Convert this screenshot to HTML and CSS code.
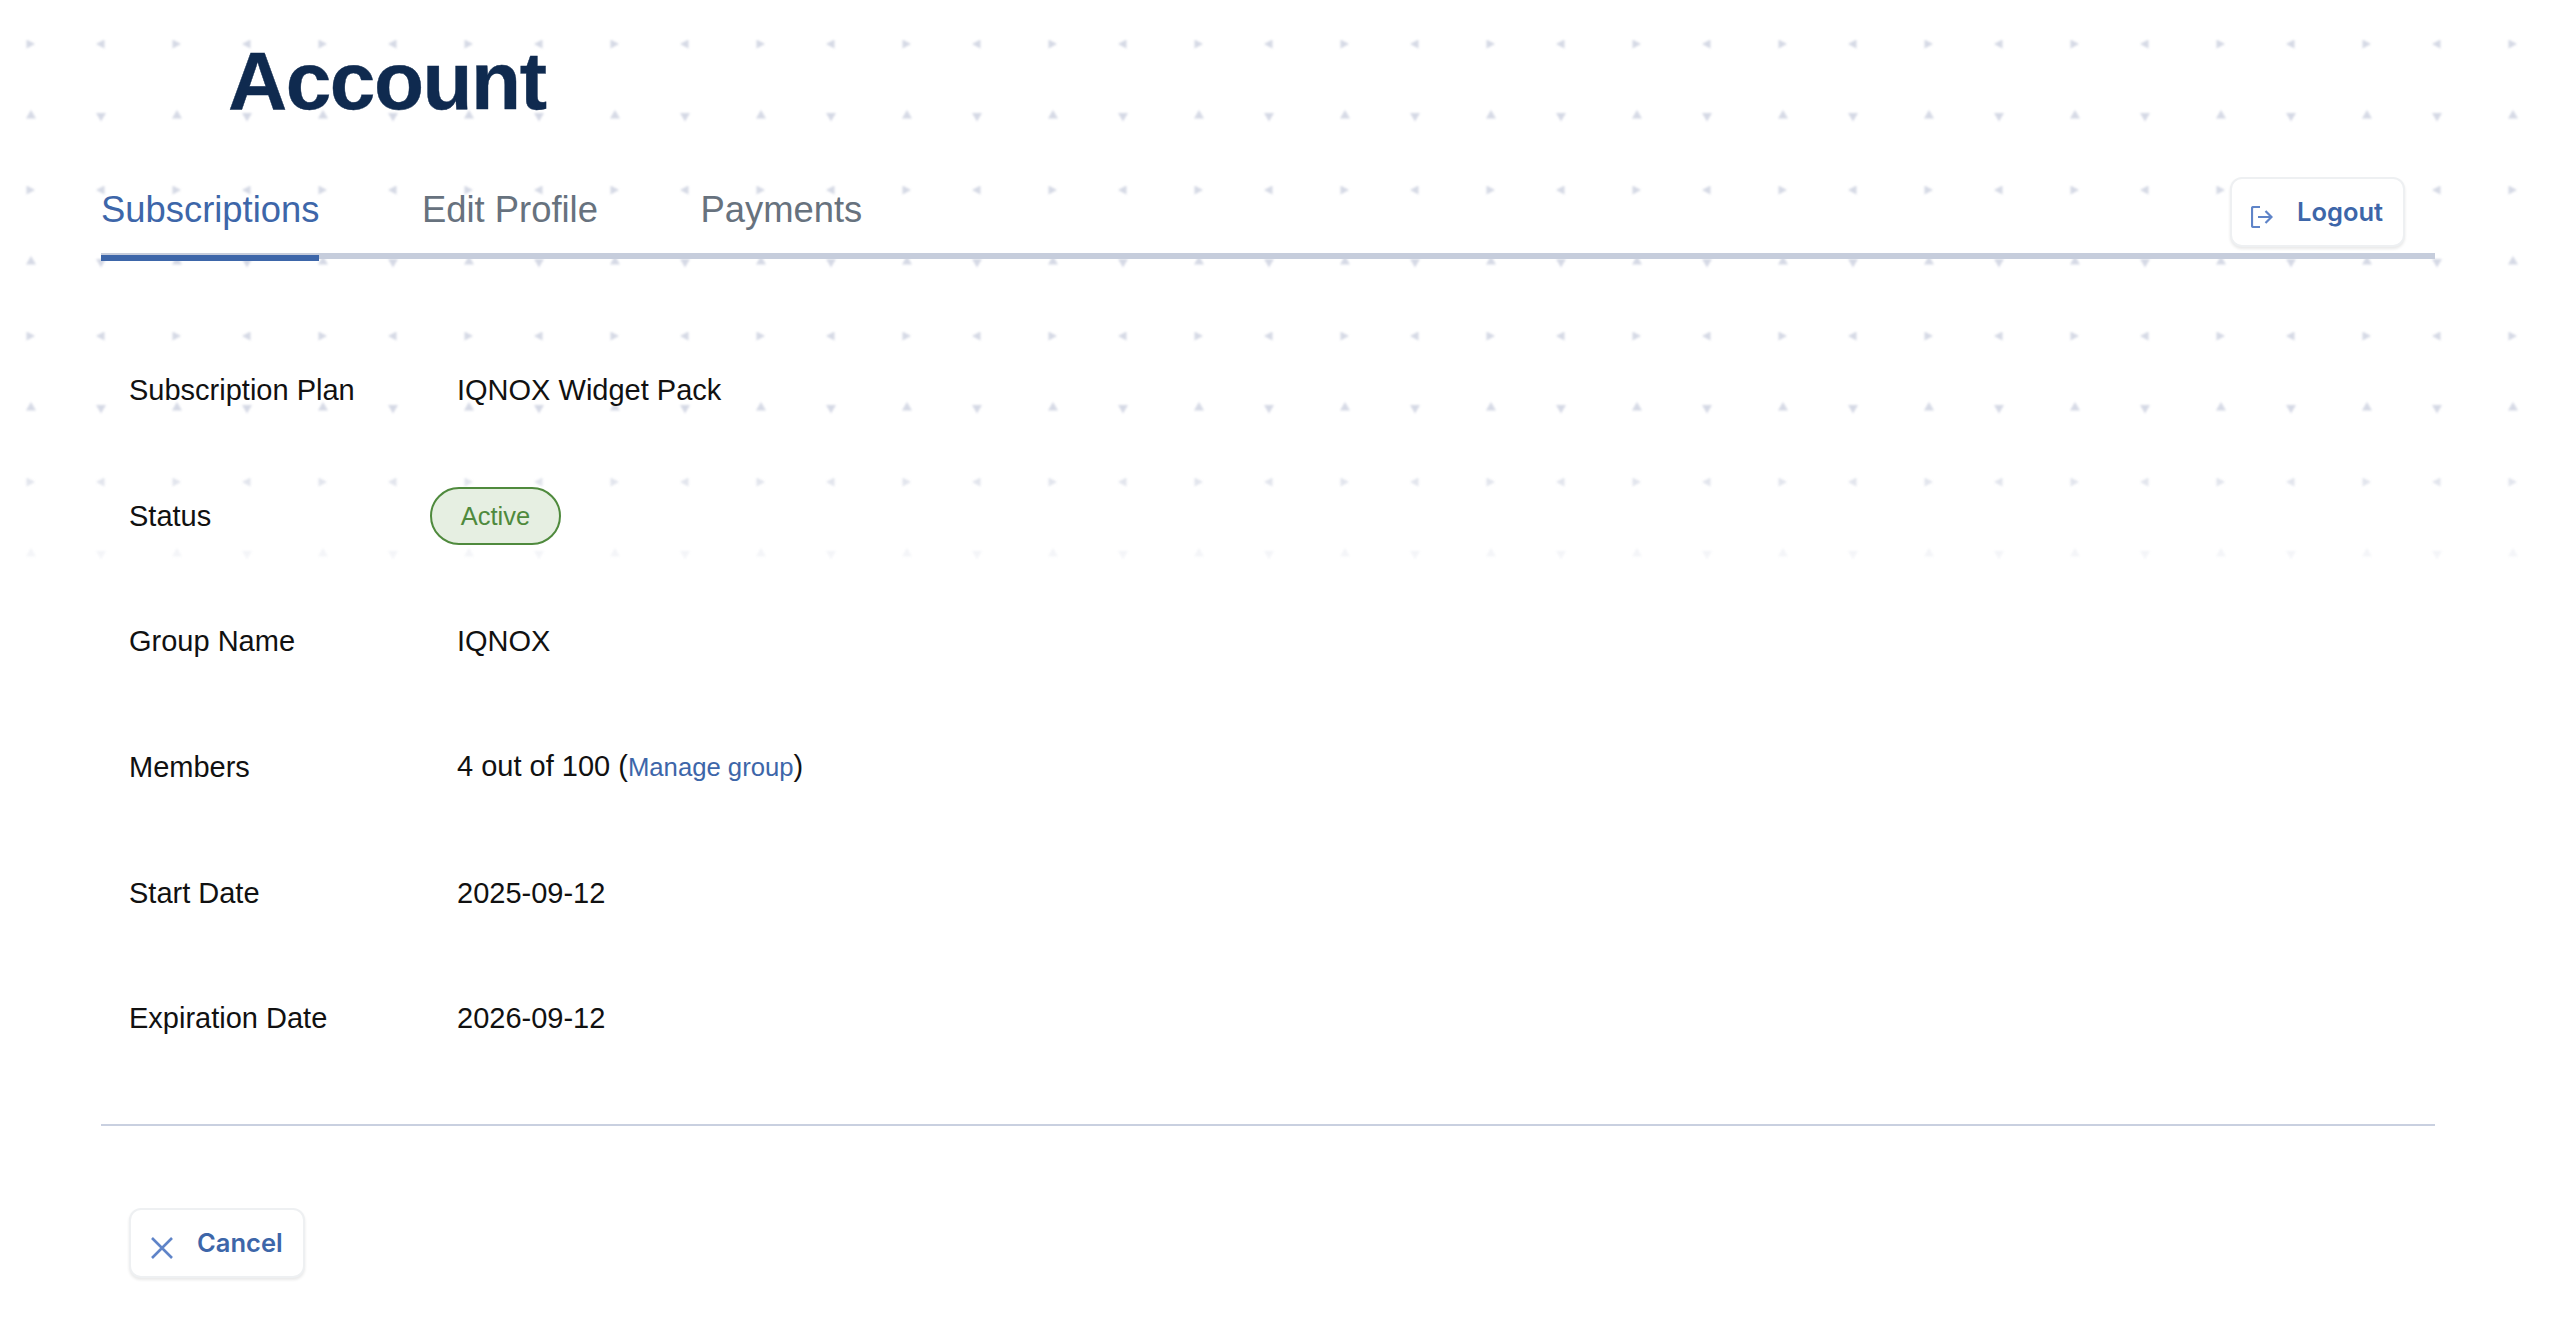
FILE: index.html
```html
<!DOCTYPE html>
<html lang="en">
<head>
<meta charset="utf-8">
<title>Account</title>
<link rel="stylesheet" href="styles.css">
</head>
<body>
<svg class="dots" aria-hidden="true" width="2560" height="640">
  <defs>
    <pattern id="tri" x="31" y="44" width="146" height="146" patternUnits="userSpaceOnUse" patternTransform="translate(-4 -4)">
      <path d="M-0.500 -0.500L8 4L-0.500 8.500Z M77.500 -0.500L69 4L77.500 8.500Z M-1 78.500L4 70L9 78.500Z M69 73L79 73L74 81.500Z" fill="#d5d9e5"/>
      <path d="M145.500 -0.500L154 4L145.500 8.500Z M145 78.500L150 70L155 78.500Z" fill="#d5d9e5"/>
    </pattern>
  </defs>
  <rect width="2560" height="640" fill="url(#tri)"/>
</svg>
<main class="page">
  <h1 class="title">Account</h1>
  <nav class="tabs">
    <a class="tab tab-active">Subscriptions</a>
    <a class="tab">Edit Profile</a>
    <a class="tab">Payments</a>
    <button class="btn btn-logout">
      <svg class="icon" viewBox="0 0 22 22" width="22" height="22"><path d="M9 1H2.500Q1 1 1 2.500V19.500Q1 21 2.500 21H9M7 11H20.500M14.500 5L20.500 11L14.500 17" fill="none" stroke="#5f84c8" stroke-width="2.200"/></svg>
      <span>Logout</span>
    </button>
  </nav>
  <dl class="details">
    <dt>Subscription Plan</dt><dd>IQNOX Widget Pack</dd>
    <dt>Status</dt><dd><span class="badge">Active</span></dd>
    <dt>Group Name</dt><dd>IQNOX</dd>
    <dt>Members</dt><dd>4 out of 100 (<a class="link">Manage group</a>)</dd>
    <dt>Start Date</dt><dd>2025-09-12</dd>
    <dt>Expiration Date</dt><dd>2026-09-12</dd>
  </dl>
  <div class="footer">
    <button class="btn btn-cancel">
      <svg class="icon" viewBox="0 0 22 22" width="22" height="22"><path d="M1 1L21 21M21 1L1 21" fill="none" stroke="#5f84c8" stroke-width="2.600"/></svg>
      <span>Cancel</span>
    </button>
  </div>
</main>
</body>
</html>
```
FILE: styles.css
```css
* { box-sizing: border-box; }
html, body { margin: 0; padding: 0; background: #fff; }
body {
  position: relative;
  height: 1333px;
  overflow: hidden;
  font-family: "Liberation Sans", Arial, sans-serif;
  color: #111;
}
.dots {
  position: absolute;
  left: 0;
  top: 0;
  -webkit-mask-image: linear-gradient(to bottom, #000 0, #000 430px, transparent 600px);
  mask-image: linear-gradient(to bottom, #000 0, #000 430px, transparent 600px);
  filter: blur(0.9px);
}
.page {
  position: relative;
  padding: 0 125px 0 101px;
}
.title {
  margin: 0 0 0 127px;
  padding-top: 34px;
  height: 177px;
  font-size: 82px;
  line-height: 94px;
  font-weight: 700;
  letter-spacing: -1.5px;
  -webkit-text-stroke: 0.4px #0f2a4f;
  color: #0f2a4f;
}
.tabs {
  display: flex;
  align-items: flex-end;
  gap: 102.500px;
  height: 82px;
  border-bottom: 6px solid #c6cddc;
  padding-right: 30px;
}
.tab {
  height: 78px;
  padding-top: 2px;
  margin-bottom: -8px;
  font-size: 36.400px;
  line-height: 50px;
  color: #67727e;
  border-bottom: 6px solid transparent;
}
.tab-active {
  color: #3d66a9;
  border-bottom-color: #3d66a9;
}
.btn {
  display: flex;
  align-items: center;
  gap: 24px;
  width: 175px;
  height: 70px;
  padding: 0 0 0 19px;
  background: #fff;
  border: 2px solid #eef0f2;
  border-radius: 12px;
  box-shadow: 0 2px 3px rgba(0, 0, 0, 0.09);
  font-family: Inter, "Liberation Sans", sans-serif;
  font-size: 25.500px;
  font-weight: 600;
  color: #3d66a9;
}
.btn span { position: relative; top: -1px; }
.icon { flex: none; position: relative; top: 5px; }
.btn-logout {
  margin-left: auto;
  align-self: flex-start;
  margin-top: 0;
}
.btn-cancel {
  width: 176px;
  padding-left: 20px;
}
.details {
  display: grid;
  grid-template-columns: 328px 1fr;
  grid-auto-rows: 125.7px;
  align-items: center;
  margin: 68px 0 0;
  padding: 0 0 0 28px;
  height: 799px;
  font-size: 29px;
  line-height: 36px;
  border-bottom: 2px solid #c9d0e0;
}
.details dt, .details dd { margin: 0; }
.link { color: #3d66a9; font-size: 25.700px; }
.badge {
  display: inline-flex;
  align-items: center;
  justify-content: center;
  margin-left: -27px;
  width: 131px;
  height: 58px;
  border: 2px solid #4f8a3d;
  border-radius: 29px;
  background: #e6efe2;
  color: #4f8a3d;
  font-size: 25.500px;
}
.footer {
  padding: 82px 0 0 28px;
}
```
